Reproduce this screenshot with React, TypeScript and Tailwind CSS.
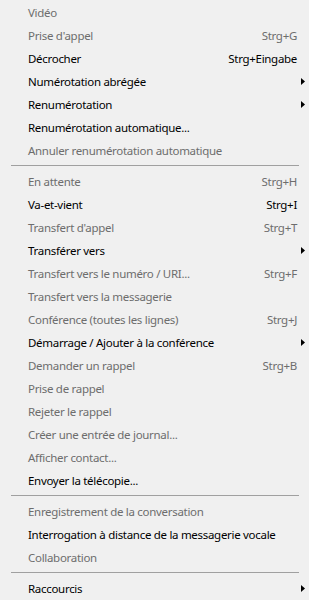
import React from 'react'

type Item =
  | { sep: true }
  | { sep?: false; label: string; shortcut?: string; sub?: boolean; disabled?: boolean }

const items: Item[] = [
  { label: 'Vidéo', disabled: true },
  { label: "Prise d'appel", shortcut: 'Strg+G', disabled: true },
  { label: 'Décrocher', shortcut: 'Strg+Eingabe' },
  { label: 'Numérotation abrégée', sub: true },
  { label: 'Renumérotation', sub: true },
  { label: 'Renumérotation automatique...' },
  { label: 'Annuler renumérotation automatique', disabled: true },
  { sep: true },
  { label: 'En attente', shortcut: 'Strg+H', disabled: true },
  { label: 'Va-et-vient', shortcut: 'Strg+I' },
  { label: "Transfert d'appel", shortcut: 'Strg+T', disabled: true },
  { label: 'Transférer vers', sub: true },
  { label: 'Transfert vers le numéro / URI...', shortcut: 'Strg+F', disabled: true },
  { label: 'Transfert vers la messagerie', disabled: true },
  { label: 'Conférence (toutes les lignes)', shortcut: 'Strg+J', disabled: true },
  { label: 'Démarrage / Ajouter à la conférence', sub: true },
  { label: 'Demander un rappel', shortcut: 'Strg+B', disabled: true },
  { label: 'Prise de rappel', disabled: true },
  { label: 'Rejeter le rappel', disabled: true },
  { label: 'Créer une entrée de journal...', disabled: true },
  { label: 'Afficher contact...', disabled: true },
  { label: 'Envoyer la télécopie...' },
  { sep: true },
  { label: 'Enregistrement de la conversation', disabled: true },
  { label: 'Interrogation à distance de la messagerie vocale' },
  { label: 'Collaboration', disabled: true },
  { sep: true },
  { label: 'Raccourcis', sub: true },
]

export default function App() {
  return (
    <div
      className="w-[309px] h-[600px] bg-[#f0f0f0] pt-[1px] overflow-hidden text-[11.5px] tracking-[-0.3px] leading-none"
      style={{ fontFamily: '"Noto Sans", "Open Sans", sans-serif' }}
    >
      {items.map((it, i) =>
        it.sep ? (
          // separator: 8px high, line sits 3px down
          <div key={i} className="h-[8px] pt-[3px] pl-[11px] pr-[10px]">
            <div className="h-px w-full bg-[#a0a0a0]" />
          </div>
        ) : (
          <div
            key={i}
            className={`h-[23px] flex items-center pl-[28px] ${it.disabled ? 'text-[#6d6d6d]' : 'text-black'}`}
          >
            <span className="flex-1 whitespace-nowrap">{it.label}</span>
            {it.shortcut && <span className="whitespace-nowrap">{it.shortcut}</span>}
            <span className="w-[12px] flex justify-start pl-[4px]">
              {it.sub && (
                <svg width="4" height="7" viewBox="0 0 4 7">
                  <path d="M0 0 L4 3.5 L0 7 Z" fill="#000" />
                </svg>
              )}
            </span>
          </div>
        )
      )}
    </div>
  )
}
